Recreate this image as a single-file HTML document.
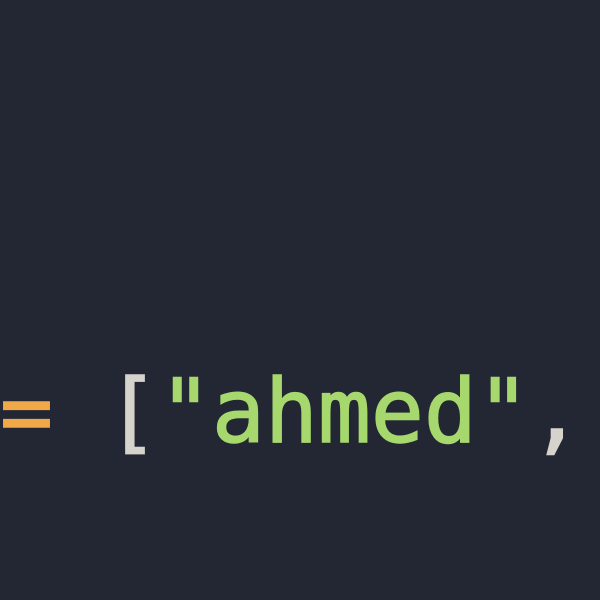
<!DOCTYPE html>
<html><head><style>
html,body{margin:0;padding:0;background:#222733;width:600px;height:600px;overflow:hidden}
.c{position:absolute;left:0;top:435px;transform:translateY(-76%);font-family:"DejaVu Sans Mono","Liberation Mono",monospace;font-size:88px;line-height:1;white-space:pre;-webkit-text-stroke:1.5px currentColor}
.o{color:#f0a848}.b{color:#d6d3cc}.g{color:#a6d86e}
</style></head><body>
<div class="c"><span class="o">=</span> <span class="b">[</span><span class="g">"ahmed"</span><span class="b">,</span></div>
</body></html>
